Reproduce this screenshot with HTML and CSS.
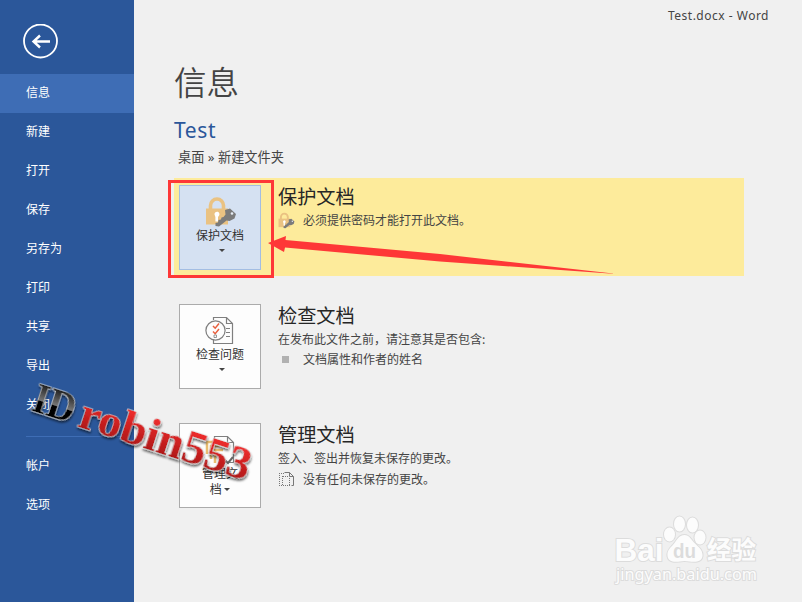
FILE: index.html
```html
<!DOCTYPE html>
<html lang="zh-CN">
<head>
<meta charset="utf-8">
<title>Test.docx - Word</title>
<link rel="stylesheet" href="styles.css">
</head>
<body>
<svg class="defs" width="0" height="0" aria-hidden="true">
  <symbol id="lock" viewBox="0 0 32 32">
    <path d="M5.500 15V9.500a6.500 6.500 0 0 1 13 0V15" fill="none" stroke="#eac282" stroke-width="3.600"/>
    <path d="M1 12.500h22V28.500H1z" fill="#eac282"/>
    <path d="M9.500 18.500a2.500 2.500 0 1 1 4.200 1.500l-.7 1v4.500h-2.600V21z" fill="#fff"/>
    <path d="M20 14l5-1.500 6 5.500-1.500 4.500-5 2.500-3-.5-7.500 6-3.500-.5v-3l2.500-.5.500-2.500 2.500-.5.500-2 2-.500 2-2.500z" fill="#7b7b7b"/>
    <circle cx="27" cy="17.500" r="1.300" fill="#e8edf5"/>
  </symbol>
</svg>
<div class="app">
  <nav class="sidebar">
    <div class="back">
      <svg width="36" height="36" viewBox="0 0 36 36" fill="none" stroke="#fff">
        <circle cx="17.500" cy="17" r="16.500" stroke-width="1.800"/>
        <path d="M27 17.500H11M17 11.500l-6.500 6 6.500 6" stroke-width="2.400"/>
      </svg>
    </div>
    <a class="item active">信息</a>
    <a class="item">新建</a>
    <a class="item">打开</a>
    <a class="item">保存</a>
    <a class="item">另存为</a>
    <a class="item">打印</a>
    <a class="item">共享</a>
    <a class="item">导出</a>
    <a class="item">关闭</a>
    <hr class="divider">
    <a class="item">帐户</a>
    <a class="item">选项</a>
  </nav>
  <main class="main">
    <div class="window-title">Test.docx - Word</div>
    <h1>信息</h1>
    <h2>Test</h2>
    <p class="path">桌面 » 新建文件夹</p>
    <section class="panel highlight">
      <button class="tile selected">
        <svg class="tile-icon" width="32" height="32"><use href="#lock"/></svg>
        <span>保护文档</span>
        <i class="caret"></i>
      </button>
      <div class="info">
        <h3>保护文档</h3>
        <p class="row"><svg class="row-icon" width="17" height="17"><use href="#lock"/></svg>必须提供密码才能打开此文档。</p>
      </div>
    </section>
    <section class="panel">
      <button class="tile">
        <svg class="tile-icon" width="32" height="32" viewBox="0 0 32 32" fill="none" stroke="#7f7f7f" stroke-width="1.200">
          <path d="M8.500 5V2.500h13l6 6v20h-19V24M21.500 2.500v6h6M21 13.500h4M21 17.500h4M21 21.500h4"/>
          <circle cx="10.500" cy="15.500" r="9.600" fill="#fdfdfd"/>
          <path d="M8 11l2.200 2.200L14 8.500M8 16.500l2.200 2.200 3.800-4.700" stroke="#e8603f" stroke-width="1.500"/>
          <path d="M9 20h2.500v2.500H9z" stroke-width=".8"/>
        </svg>
        <span>检查问题</span>
        <i class="caret"></i>
      </button>
      <div class="info">
        <h3>检查文档</h3>
        <p>在发布此文件之前，请注意其是否包含:</p>
        <p class="row"><i class="bullet"></i>文档属性和作者的姓名</p>
      </div>
    </section>
    <section class="panel">
      <button class="tile">
        <svg class="tile-icon" width="32" height="32" viewBox="0 0 32 32" fill="none">
          <path d="M9.500 9V2.500h13l6 6v20h-14M22.500 2.500v6h6" stroke="#7f7f7f" stroke-width="1.200"/>
          <path d="M2 20V8h8M6 25V12h9M10 29V16h8" stroke="#e9bd70" stroke-width="2.500"/>
          <path d="M16 23l7 6 5-6" stroke="#666" stroke-width="2"/>
        </svg>
        <span class="wrap">管理文<br>档 <i class="caret"></i></span>
      </button>
      <div class="info">
        <h3>管理文档</h3>
        <p>签入、签出并恢复未保存的更改。</p>
        <p class="row lower"><svg class="row-icon" width="17" height="17" viewBox="0 0 17 17" fill="none" stroke="#777">
          <path d="M6.500 1.500h5l4 4v9h-2M11.500 1.500v4h4"/>
          <path d="M1 2.500h5M1.500 4v11M3 14.500h9M4.500 5v9M5 5.500h5M11.500 7v7" stroke-dasharray="1 1"/>
        </svg>没有任何未保存的更改。</p>
      </div>
    </section>
  </main>
  <svg class="overlay" width="802" height="602" viewBox="0 0 802 602">
    <defs>
      <linearGradient id="black" x1="0" y1="0" x2="0" y2="1">
        <stop offset=".2" stop-color="#222"/><stop offset=".54" stop-color="#777"/><stop offset=".55" stop-color="#000"/>
      </linearGradient>
      <linearGradient id="red" x1="0" y1="0" x2="0" y2="1">
        <stop offset=".2" stop-color="#ee2c2c"/><stop offset=".8" stop-color="#b01818"/>
      </linearGradient>
      <filter id="shadow" x="-10%" y="-30%" width="120%" height="160%">
        <feDropShadow dx="1" dy="2" stdDeviation="1.200" flood-color="#000" flood-opacity=".6"/>
      </filter>
    </defs>
    <rect x="169.500" y="181.500" width="103" height="95" fill="none" stroke="#fe3737" stroke-width="3"/>
    <path d="M268 243l18-7-.5 4L440 254l173 19.500v.3L440 261.500 285 247.500l-1 4.500z" fill="#fe3737"/>
    <g class="signature" transform="translate(30 410) rotate(18)" filter="url(#shadow)">
      <text x="0" y="0" font-size="42" textLength="43" lengthAdjust="spacingAndGlyphs" fill="url(#black)">ID</text>
      <text x="49" y="1" font-size="47" textLength="178" lengthAdjust="spacing" fill="url(#red)">robin553</text>
    </g>
    <g class="watermark">
      <text x="614.500" y="560.500" font-size="32" textLength="49" lengthAdjust="spacingAndGlyphs">Bai</text>
      <ellipse cx="669.500" cy="534.500" rx="5.500" ry="7"/>
      <ellipse cx="679.500" cy="524" rx="5.500" ry="7.500"/>
      <ellipse cx="692.500" cy="525" rx="5.500" ry="7.500"/>
      <ellipse cx="700" cy="537.500" rx="5.500" ry="7"/>
      <path d="M684.500 535c-5 0-7 4-10 8s-8 7-7 13c1 7 8 6 17 5 10 1 17 2 18-5 .5-6-4-9-8-13s-5-8-10-8z"/>
      <text class="du" x="673" y="558" font-size="21" textLength="23" lengthAdjust="spacingAndGlyphs">du</text>
      <text class="cjk" x="707" y="558.500" font-size="24.500">经验</text>
      <text class="url" x="616" y="580" font-size="16.500" textLength="141" lengthAdjust="spacingAndGlyphs">jingyan.baidu.com</text>
    </g>
  </svg>
</div>
</body>
</html>
```

FILE: styles.css
```css
* { box-sizing: border-box; }
body {
  margin: 0;
  font-family: "Noto Sans", "Noto Sans CJK SC", sans-serif;
  font-size: 12px;
  color: #444;
  background: #f0f0f0;
}
h1, h2, h3, p { margin: 0; font-weight: 400; }
.defs { position: absolute; }
.app { position: relative; display: flex; width: 802px; height: 602px; overflow: hidden; }
.sidebar { width: 134px; background: #2b579a; color: #fff; display: flex; flex-direction: column; }
.back { height: 74px; padding: 24px 0 0 23px; }
.item { height: 39px; line-height: 35px; padding-left: 26px; font-family: "Noto Sans CJK SC", sans-serif; }
.active { background: #3e6db5; }
.divider { width: 96px; margin: 11px 0 10px 26px; border: 0; border-top: 1px solid #3e6db5; }
.main { flex: 1; padding-left: 40px; display: flex; flex-direction: column; }
.window-title { height: 56px; line-height: 32px; text-align: right; padding-right: 33px; font-size: 12px; letter-spacing: .5px; }
h1 { height: 58px; font: 350 32.500px/50px "Noto Sans CJK SC", sans-serif; }
h2 { height: 32px; line-height: 32px; font-size: 21px; color: #2b579a; letter-spacing: .6px; }
.path { height: 32px; line-height: 23px; padding-left: 4px; font-size: 13.200px; }
.panel { width: 570px; height: 98px; margin-bottom: 21px; padding: 7px 5px; display: flex; gap: 17px; }
.highlight { background: #fdeb9b; }
.tile {
  width: 82px; height: 85px; padding: 10px 0 0; border: 1px solid #ababab; background: #fdfdfd;
  display: flex; flex-direction: column; align-items: center;
  font: 12px/16px "Noto Sans CJK SC", sans-serif; color: #333;
}
.tile span { margin-top: -1px; }
.tile-icon { flex: none; margin-left: 2px; }
.selected { background: #d5e1f2; border-color: #a3bde3; }
.caret { display: inline-block; margin: 6px 0 0 3px; border: 3px solid transparent; border-top-color: #444; border-bottom: 0; }
.wrap { text-align: center; }
.wrap .caret { margin: 0; vertical-align: 3px; }
.info { font: 12px/20px "Noto Sans CJK SC", sans-serif; }
.info h3 { height: 25px; font-size: 19.200px; line-height: 23px; color: #262626; }
.row { display: flex; align-items: center; }
.lower { padding-top: 1px; }
.row-icon { margin-right: 8px; }
.bullet { width: 7px; height: 7px; background: #b1b1b1; margin: 0 14px 0 4px; }
.overlay { position: absolute; left: 0; top: 0; pointer-events: none; }
.signature { font-family: "Liberation Serif", serif; font-weight: 700; stroke: #ddd; stroke-width: 1.200px; paint-order: stroke; }
.watermark { font-family: "Liberation Sans", sans-serif; font-weight: 700; fill: #fcfcfc; stroke: #dcdcdc; stroke-width: 2px; paint-order: stroke; }
.watermark .du { fill: #dcdcdc; stroke: none; }
.watermark .cjk { font-family: "Noto Sans CJK SC", sans-serif; }
.watermark .url { font-family: "Noto Sans", sans-serif; font-weight: 400; }
```
